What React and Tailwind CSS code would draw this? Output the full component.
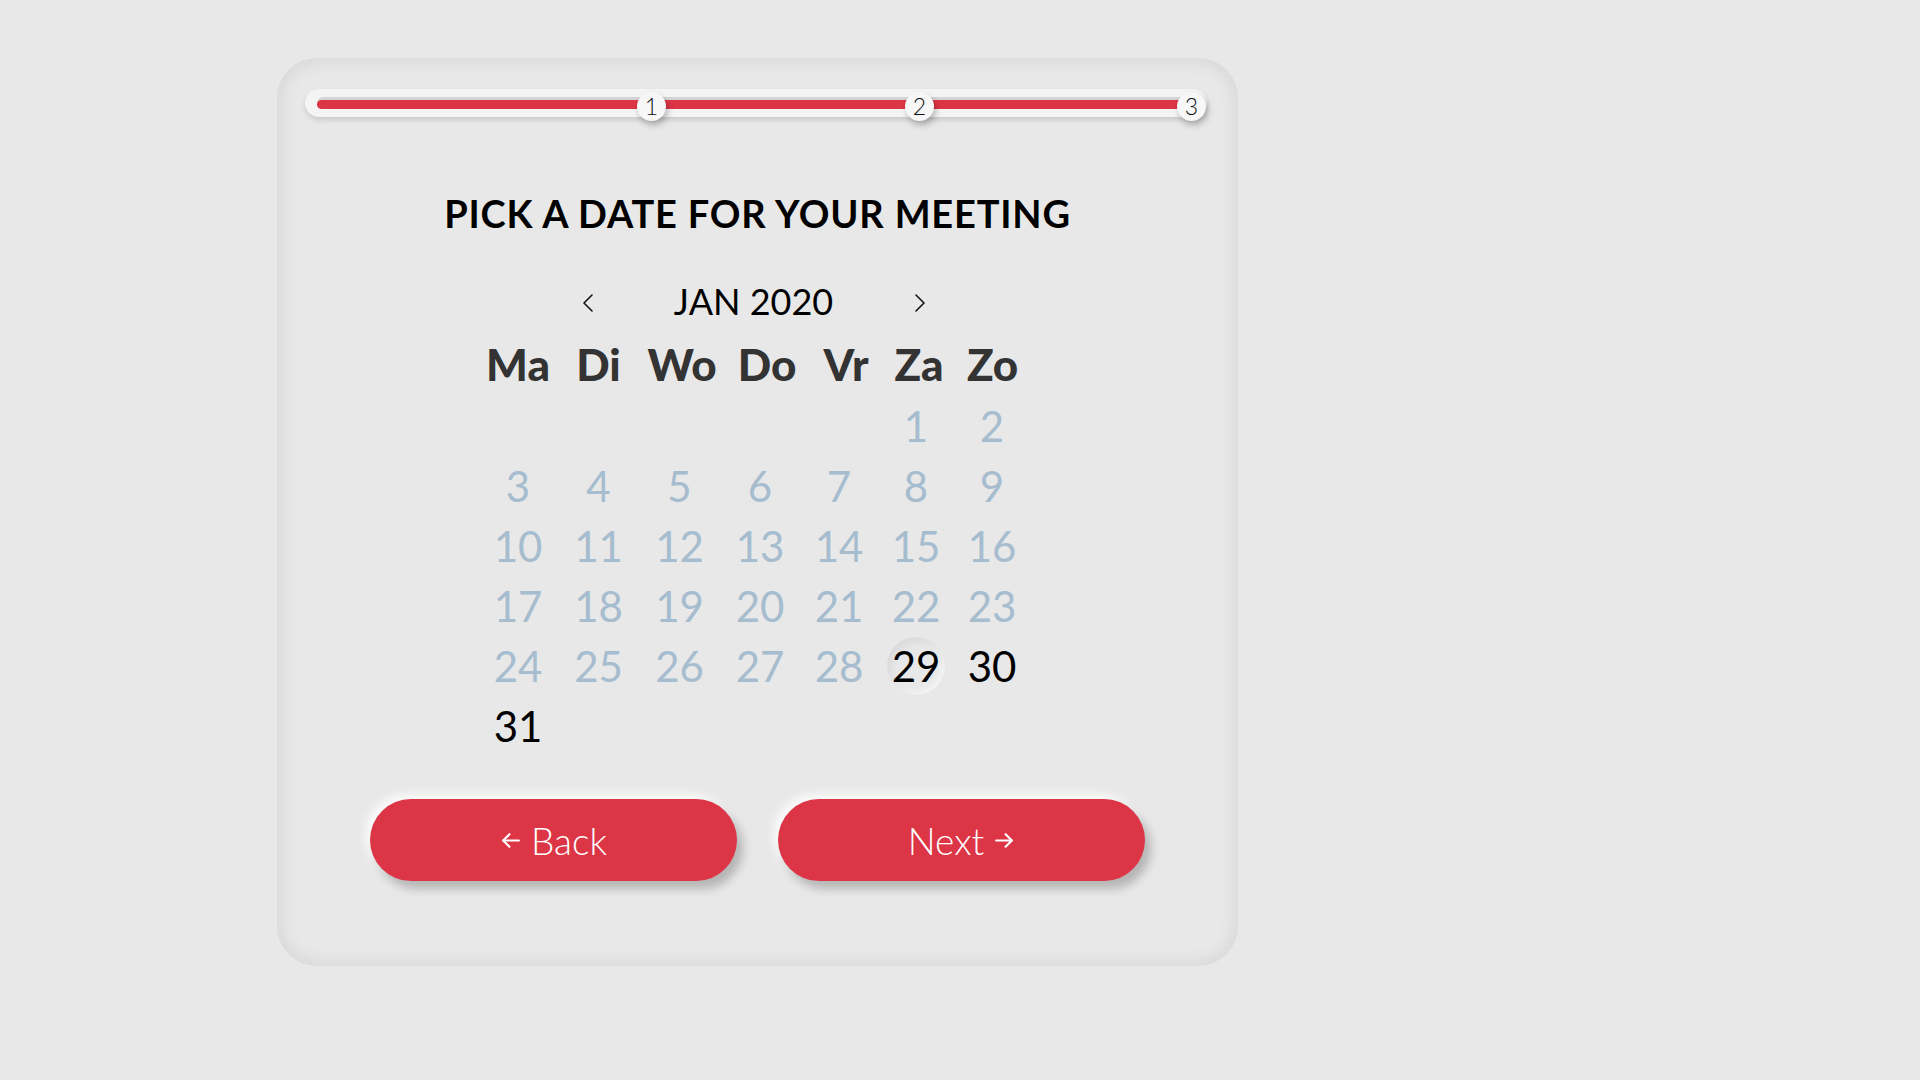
import React from 'react';

const DAYS = ['Ma', 'Di', 'Wo', 'Do', 'Vr', 'Za', 'Zo'];
const AVAILABLE = [29, 30, 31];
const SELECTED = 29;

const cells = [...Array(5).fill(null), ...Array.from({ length: 31 }, (_, i) => i + 1)];
const rows = [];
for (let i = 0; i < cells.length; i += 7) rows.push(cells.slice(i, i + 7));

const Chevron = ({ dir }) => (
    <svg width="14" height="20" viewBox="0 0 14 20" fill="none" stroke="#111" strokeWidth="1.6" strokeLinecap="round" strokeLinejoin="round">
        {dir === 'left' ? <polyline points="11,2 3,10 11,18" /> : <polyline points="3,2 11,10 3,18" />}
    </svg>
);

const Arrow = ({ dir }) => (
    <svg width="21" height="21" viewBox="0 0 20 20" fill="none" stroke="white" strokeWidth="2" strokeLinecap="round" strokeLinejoin="round">
        {dir === 'left' ? (
            <>
                <line x1="3" y1="10" x2="18" y2="10" />
                <polyline points="9,4 3,10 9,16" />
            </>
        ) : (
            <>
                <line x1="2" y1="10" x2="17" y2="10" />
                <polyline points="11,4 17,10 11,16" />
            </>
        )}
    </svg>
);

const Stepper = () => {
    const steps = [
        { n: 1, left: 332 },
        { n: 2, left: 600 },
        { n: 3, left: 872 },
    ];
    return (
        <div className="relative ml-[28px] w-[902px] h-[28px] rounded-full bg-[#f4f4f4] shadow-[0_3px_5px_rgba(0,0,0,0.13)] flex items-center px-[12px]">
            <div className="w-full h-[12px] rounded-full bg-[#d4d4d4] pt-[3px] pr-[12px]">
                <div className="h-[9px] rounded-full bg-[#dc3545]" />
            </div>
            {steps.map((s) => (
                <div
                    key={s.n}
                    className="absolute top-[3px] w-[29px] h-[29px] rounded-full bg-[#f7f7f7] shadow-[2px_4px_6px_rgba(0,0,0,0.25)] flex items-center justify-center text-[23px] leading-none font-light text-[#111]"
                    style={{ left: s.left }}
                >
                    {s.n}
                </div>
            ))}
        </div>
    );
};

const btn =
    'w-[367px] h-[82px] rounded-full bg-[#dc3545] text-white text-[37px] font-light flex items-center justify-center gap-[10px] shadow-[6px_8px_10px_rgba(0,0,0,0.22),-5px_-5px_10px_rgba(255,255,255,0.8)]';

export default function App() {
    return (
        <div className="min-h-screen w-full bg-[#e8e8e8] pt-[58px] pl-[277px]" style={{ fontFamily: 'Lato, "Open Sans", sans-serif' }}>
            <div className="w-[961px] h-[908px] rounded-[40px] bg-[#e8e8e8] shadow-[inset_0_0_20px_rgba(0,0,0,0.1)] pt-[31px]">
                <Stepper />

                <h1 className="mt-[73px] h-[46px] flex items-center justify-center text-[38px] font-bold tracking-[0.8px] text-black leading-none">
                    PICK A DATE FOR YOUR MEETING
                </h1>

                <div className="mt-[43px] h-[44px] flex items-center justify-center">
                    <div className="w-[346px] flex items-center justify-between -ml-[8px]">
                        <span className="pt-[4px]"><Chevron dir="left" /></span>
                        <span className="text-[36px] leading-none text-black">JAN 2020</span>
                        <span className="pt-[4px]"><Chevron dir="right" /></span>
                    </div>
                </div>

                <div className="mt-[13px] flex flex-col items-center">
                    <div className="-ml-[7px] grid grid-cols-[80px_81px_86px_84px_74px_72px_75px]">
                        {DAYS.map((d) => (
                            <div key={d} className="h-[60px] pb-[5px] flex items-center justify-center text-[44px] font-black leading-none text-[#333333]">
                                {d}
                            </div>
                        ))}
                    </div>
                    <div className="-ml-[7px] grid grid-cols-[80px_81px_81px_80px_78px_76px_76px]">
                        {rows.map((row, ri) =>
                            row.map((day, ci) => {
                                const avail = day && AVAILABLE.includes(day);
                                return (
                                    <div key={`${ri}-${ci}`} className="h-[60px] flex items-center justify-center">
                                        {day && (
                                            <span
                                                className={
                                                    'text-[42px] leading-none ' +
                                                    (avail ? 'text-black ' : 'text-[#a6bccf] ') +
                                                    (day === SELECTED
                                                        ? 'w-[58px] h-[58px] rounded-full flex items-center justify-center shadow-[inset_3px_4px_8px_rgba(0,0,0,0.07),inset_-3px_-3px_6px_rgba(255,255,255,0.6)]'
                                                        : '')
                                                }
                                            >
                                                {day}
                                            </span>
                                        )}
                                    </div>
                                );
                            })
                        )}
                    </div>
                </div>

                <div className="mt-[43px] flex justify-center gap-[41px]">
                    <button className={btn}>
                        <Arrow dir="left" />
                        <span className="leading-none">Back</span>
                    </button>
                    <button className={btn}>
                        <span className="leading-none">Next</span>
                        <Arrow dir="right" />
                    </button>
                </div>
            </div>
        </div>
    );
}
